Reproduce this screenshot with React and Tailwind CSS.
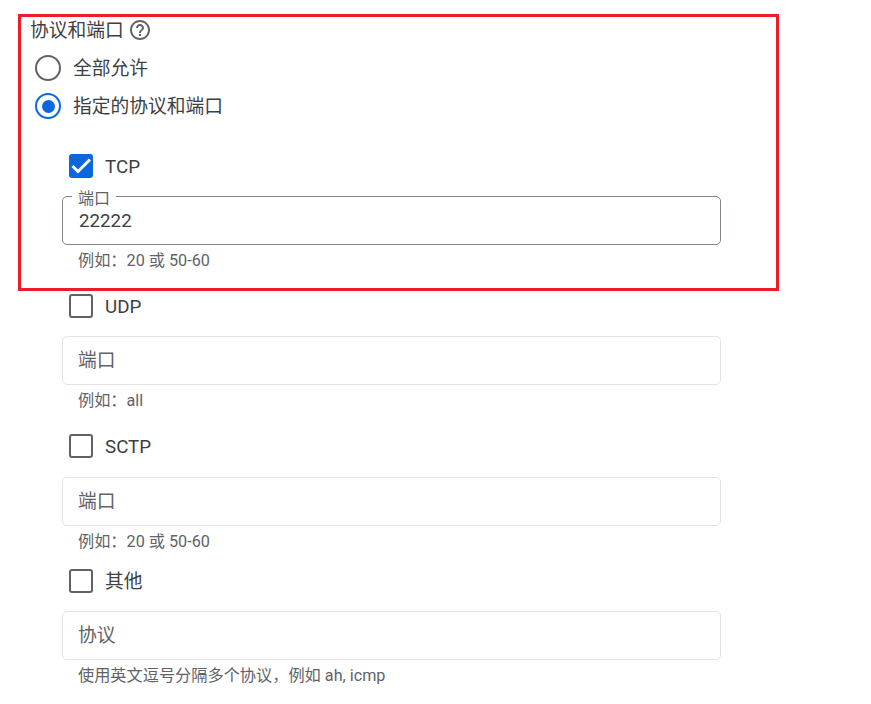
import { useState } from "react";

const FONT = "font-['Roboto','Noto_Sans_CJK_SC',sans-serif]";

function HelpIcon() {
  return (
    <svg width="24" height="24" viewBox="0 0 24 24" fill="#5f6368">
      <path d="M11 18h2v-2h-2v2zm1-16C6.48 2 2 6.48 2 12s4.48 10 10 10 10-4.48 10-10S17.52 2 12 2zm0 18c-4.41 0-8-3.59-8-8s3.59-8 8-8 8 3.59 8 8-3.59 8-8 8zm0-14c-2.21 0-4 1.79-4 4h2c0-1.1.9-2 2-2s2 .9 2 2c0 2-3 1.75-3 5h2c0-2.25 3-2.5 3-5 0-2.21-1.79-4-4-4z" />
    </svg>
  );
}

function Radio({ checked, label, className }) {
  return (
    <div className={`flex items-center h-[26px] ${className}`}>
      <span
        className={`flex items-center justify-center w-[26px] h-[26px] rounded-full border-2 ${
          checked ? "border-[#0b67de]" : "border-[#5f6368]"
        }`}
      >
        {checked && <span className="w-[13px] h-[13px] rounded-full bg-[#0b67de]" />}
      </span>
      <span className="ml-3 pt-[2px] text-[18.75px] leading-[26px] text-[#3c4043]">{label}</span>
    </div>
  );
}

function Check({ checked, label, className }) {
  return (
    <div className={`flex items-center h-6 ml-[7px] ${className}`}>
      {checked ? (
        <span className="flex items-center justify-center w-6 h-6 rounded-[3px] bg-[#0b67de]">
          <svg width="24" height="24" viewBox="0 0 24 24" fill="none" stroke="#fff" strokeWidth="3">
            <path d="M3.5 12l5.5 5.5L21 5.5" />
          </svg>
        </span>
      ) : (
        <span className="w-6 h-6 rounded-[3px] border-2 border-[#5f6368]" />
      )}
      <span className="ml-3 pt-px text-[18.75px] leading-6 text-[#3c4043]">{label}</span>
    </div>
  );
}

function Field({ placeholder, hint, className }) {
  return (
    <div className={className}>
      <div className="flex items-center w-[659px] h-[49px] pl-[15px] pt-[2px] rounded-[5px] border border-[#e3e4e6] text-[18.75px] text-[#5f6368]">
        {placeholder}
      </div>
      <p className="mt-[6px] pl-4 text-[16.2px] leading-5 text-[#5f6368]">{hint}</p>
    </div>
  );
}

export default function App() {
  const [port] = useState("22222");

  return (
    <div className={`relative min-h-[704px] bg-white ${FONT}`}>
      <div className="pl-[30px] pt-[18px]">
        <div className="flex items-center h-6 gap-1">
          <span className="pt-px text-[18.75px] leading-6 text-[#3c4043]">协议和端口</span>
          <HelpIcon />
        </div>
        <div className="ml-[5px]">
          <Radio label="全部允许" className="mt-[13px]" />
          <Radio checked label="指定的协议和端口" className="mt-3" />
        </div>

        <div className="ml-[32px]">
          <Check checked label="TCP" className="mt-[35px]" />

          {/* focused / filled port field */}
          <div className="mt-[18px]">
            <div className="relative w-[659px] h-[49px] pl-4 pt-3 rounded-[5px] border border-[#80868b] text-[18.75px] leading-6 text-[#3c4043]">
              <span className="absolute left-[9px] -top-[6px] px-[6px] bg-white text-[16px] leading-[15px] text-[#5f6368]">
                端口
              </span>
              {port}
            </div>
            <p className="mt-[6px] pl-4 text-[16.2px] leading-5 text-[#5f6368]">例如：20 或 50-60</p>
          </div>

          <Check label="UDP" className="mt-[23px]" />
          <Field placeholder="端口" hint="例如：all" className="mt-[18px]" />

          <Check label="SCTP" className="mt-[23px]" />
          <Field placeholder="端口" hint="例如：20 或 50-60" className="mt-[19px]" />

          <Check label="其他" className="mt-[17px]" />
          <Field placeholder="协议" hint="使用英文逗号分隔多个协议，例如 ah, icmp" className="mt-[18px]" />
        </div>
      </div>

      {/* red annotation frame drawn over the screenshot */}
      <div className="absolute left-[18px] top-[14px] w-[761px] h-[277px] border-[3px] border-[#ee1c25] pointer-events-none" />
    </div>
  );
}
